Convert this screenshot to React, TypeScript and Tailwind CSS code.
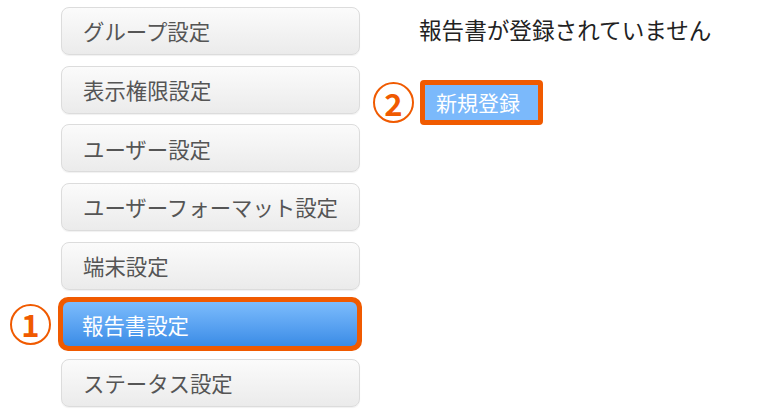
import React from 'react';

const items = [
  'グループ設定',
  '表示権限設定',
  'ユーザー設定',
  'ユーザーフォーマット設定',
  '端末設定',
  '報告書設定',
  'ステータス設定',
];

const font = { fontFamily: '"Noto Sans CJK JP", "Noto Sans", sans-serif' };

const Circled: React.FC<{ n: string }> = ({ n }) => (
  <div className="w-[41px] h-[41px] rounded-full border-2 border-[#f05a00] flex items-center justify-center text-[#f05a00] text-[31px] font-bold leading-none pb-[1px]">
    {n}
  </div>
);

const App: React.FC = () => {
  return (
    <div className="w-[775px] h-[419px] bg-white flex" style={font}>
      <div className="flex flex-col gap-[10.67px] pt-[7px]">
        {items.map((label, i) =>
          i === 5 ? (
            <div key={label} className="flex items-center h-[48px]">
              <div className="w-[61px] flex justify-start pl-[10px]">
                <Circled n="1" />
              </div>
              <div className="-ml-[3px] -mr-[2px] h-[54px] w-[304px] rounded-[10px] border-[5px] border-[#f05a00] bg-[#f05a00]">
                <div className="h-full rounded-[6px] bg-gradient-to-b from-[#7cbcfd] to-[#3a8ce6] flex items-center pl-[19px] text-white text-[21.4px] leading-none">
                  {label}
                </div>
              </div>
            </div>
          ) : (
            <div key={label} className="flex items-center h-[48px]">
              <div className="w-[61px]" />
              <div className="w-[299px] h-[48px] rounded-[8px] border border-[#dcdcdc] bg-gradient-to-b from-[#fbfbfb] to-[#ebebeb] shadow-[0_1px_1px_rgba(0,0,0,0.06)] flex items-center pl-[21px] text-[#555] text-[21.4px] leading-none">
                {label}
              </div>
            </div>
          )
        )}
      </div>

      <div className="flex flex-col pl-[13px]">
        <div className="pl-[46px] pt-[19px] h-[80px] text-[22.6px] leading-none text-[#222]">
          報告書が登録されていません
        </div>
        <div className="flex items-center gap-[6px] h-[45px]">
          <Circled n="2" />
          <div className="h-[45px] w-[123px] rounded-[4px] border-[5px] border-[#f05a00]">
            <div className="h-full bg-[#7bb9fb] flex items-center pl-[11px] text-white text-[21px] leading-none">
              新規登録
            </div>
          </div>
        </div>
      </div>
    </div>
  );
};

export default App;
